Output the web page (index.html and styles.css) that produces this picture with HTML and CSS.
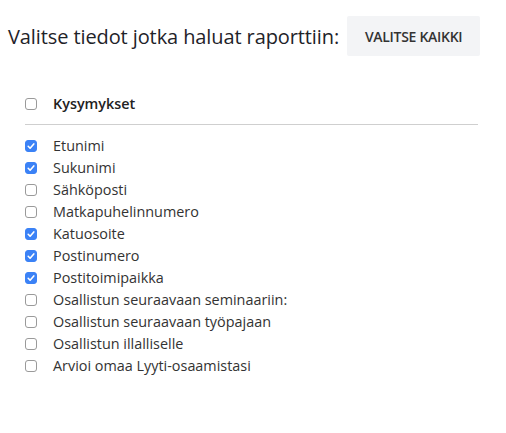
FILE: index.html
```html
<!DOCTYPE html>
<html lang="fi">
<head>
<meta charset="utf-8">
<link rel="stylesheet" href="styles.css">
</head>
<body>
<div class="page">
  <div class="header">
    <h2 class="title">Valitse tiedot jotka haluat raporttiin:</h2>
    <button class="select-all">VALITSE KAIKKI</button>
  </div>
  <div class="group">
    <label class="row head"><input type="checkbox" class="cb"><span>Kysymykset</span></label>
    <div class="divider"></div>
    <ul class="items">
      <li><label class="row"><input type="checkbox" class="cb" checked><span>Etunimi</span></label></li>
      <li><label class="row"><input type="checkbox" class="cb" checked><span>Sukunimi</span></label></li>
      <li><label class="row"><input type="checkbox" class="cb"><span>Sähköposti</span></label></li>
      <li><label class="row"><input type="checkbox" class="cb"><span>Matkapuhelinnumero</span></label></li>
      <li><label class="row"><input type="checkbox" class="cb" checked><span>Katuosoite</span></label></li>
      <li><label class="row"><input type="checkbox" class="cb" checked><span>Postinumero</span></label></li>
      <li><label class="row"><input type="checkbox" class="cb" checked><span>Postitoimipaikka</span></label></li>
      <li><label class="row"><input type="checkbox" class="cb"><span>Osallistun seuraavaan seminaariin:</span></label></li>
      <li><label class="row"><input type="checkbox" class="cb"><span>Osallistun seuraavaan työpajaan</span></label></li>
      <li><label class="row"><input type="checkbox" class="cb"><span>Osallistun illalliselle</span></label></li>
      <li><label class="row"><input type="checkbox" class="cb"><span>Arvioi omaa Lyyti-osaamistasi</span></label></li>
    </ul>
  </div>
</div>
</body>
</html>
```
FILE: styles.css
```css
* { box-sizing: border-box; }
body {
  margin: 0;
  background: #fff;
  font-family: "Open Sans", "Noto Sans", sans-serif;
  color: #2a2e33;
}
.page {
  padding: 16px 8px 0 8px;
}
.header {
  display: flex;
  align-items: center;
  gap: 8px;
}
.title {
  margin: 0;
  font-size: 20px;
  font-weight: 400;
  color: #1f2329;
  letter-spacing: -0.1px;
}
.select-all {
  height: 40px;
  width: 133px;
  border: none;
  border-radius: 2px;
  background: #f3f4f6;
  color: #333;
  font-family: inherit;
  font-size: 14px;
  font-weight: 600;
  letter-spacing: -0.3px;
  padding: 0;
}
.group {
  margin: 37px 20px 0 17px;
}
.row {
  display: flex;
  align-items: center;
  gap: 16px;
  font-size: 14.4px;
  line-height: 22px;
  color: #333;
}
.cb {
  appearance: none;
  -webkit-appearance: none;
  margin: 0;
  width: 12px;
  height: 12px;
  flex: none;
  border: 1px solid #9a9a9a;
  border-radius: 3px;
  background: #fff;
}
.cb:checked {
  border-color: #3b82f6;
  background: #3b82f6 url("data:image/svg+xml,%3Csvg xmlns='http://www.w3.org/2000/svg' viewBox='0 0 12 12'%3E%3Cpath d='M3.2 6.3 L5.1 8.2 L8.8 3.9' fill='none' stroke='white' stroke-width='1.6' stroke-linecap='round' stroke-linejoin='round'/%3E%3C/svg%3E") center / 12px 12px no-repeat;
}
.head {
  font-weight: 600;
  color: #222;
}
.divider {
  height: 1px;
  background: #cfcfcf;
  margin: 9px 0 10px 0;
}
.items {
  list-style: none;
  margin: 0;
  padding: 0;
}
```
